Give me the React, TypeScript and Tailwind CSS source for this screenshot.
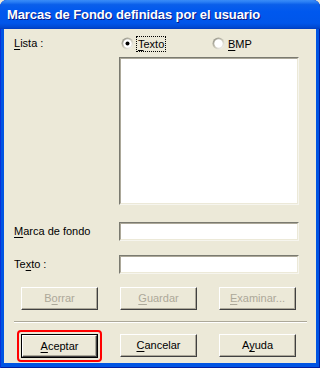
import React from 'react';

const font = { fontFamily: '"Liberation Sans", Arial, sans-serif' };

function U({ children }: { children: React.ReactNode }) {
  return <span className="underline underline-offset-[2px] decoration-1">{children}</span>;
}

function Radio({ checked }: { checked?: boolean }) {
  return (
    <svg width="13" height="13" viewBox="0 0 13 13" className="shrink-0">
      <defs>
        <linearGradient id={checked ? 'rg1' : 'rg2'} x1="0" y1="0" x2="1" y2="1">
          <stop offset="0" stopColor="#8a8a80" />
          <stop offset="0.5" stopColor="#c8c5b6" />
          <stop offset="1" stopColor="#ffffff" />
        </linearGradient>
      </defs>
      <circle cx="6.5" cy="6.5" r="6" fill={`url(#${checked ? 'rg1' : 'rg2'})`} />
      <circle cx="6.5" cy="6.5" r="4.2" fill="#ffffff" />
      {checked && <circle cx="6.5" cy="6.5" r="2" fill="#000000" />}
    </svg>
  );
}

function Btn({ children, disabled, isDefault }: { children: React.ReactNode; disabled?: boolean; isDefault?: boolean }) {
  const inner = (
    <div
      className={`flex h-full w-full items-center justify-center border border-t-white border-l-white border-r-[#404040] border-b-[#404040] bg-[#ECE9D8] text-[11px] shadow-[inset_-1px_-1px_0_#ACA899] ${
        disabled ? 'text-[#ACA899]' : 'text-black'
      }`}
    >
      {children}
    </div>
  );
  if (isDefault) {
    return <div className="h-[24px] w-[77px] border border-black">{inner}</div>;
  }
  return <div className="h-[23px] w-[77px]">{inner}</div>;
}

function Field({ className }: { className: string }) {
  return (
    <div
      className={`border border-t-[#7A7A70] border-l-[#7A7A70] border-r-[#F6F5EE] border-b-[#F6F5EE] ${className}`}
    >
      <div className="h-full w-full border border-t-[#ACA899] border-l-[#ACA899] border-r-[#ECE9D8] border-b-[#ECE9D8] bg-white" />
    </div>
  );
}

export default function App() {
  return (
    <div className="h-[368px] w-[320px] overflow-hidden bg-[#ECE9D8]" style={font}>
      <div className="flex h-[368px] w-[320px] flex-col rounded-t-[7px] bg-[#0054E3] shadow-[inset_1px_0_0_#0831D9,inset_-1px_0_0_#001EA0,inset_0_-1px_0_#001EA0]">
        <div className="flex h-[29px] items-center rounded-t-[7px] bg-[linear-gradient(to_bottom,#3A8CF7_0%,#2B80F5_6%,#0A5FEA_16%,#0058EE_40%,#0056EA_80%,#0049D2_94%,#003CBE_100%)] pl-[7px] pt-[1px]">
          <span className="text-[13px] font-bold tracking-[-0.1px] text-white [text-shadow:1px_1px_0_#0A1883]">
            Marcas de Fondo definidas por el usuario
          </span>
        </div>
        <div className="mx-[4px] mb-[5px] flex-1 bg-[#ECE9D8] text-[11px] text-black">
          <div className="relative pl-[10px] pt-[6px]">
            <div className="flex h-[17px] items-center">
              <div className="w-[107px]">
                <U>L</U>ista :
              </div>
              <div className="flex w-[91px] items-center">
                <Radio checked />
                <span className="ml-[2px] border border-dotted border-black px-[1px] leading-[14px]">
                  <U>T</U>exto
                </span>
              </div>
              <div className="flex items-center">
                <Radio />
                <span className="ml-[3px] leading-[14px]">
                  <U>B</U>MP
                </span>
              </div>
            </div>
            <div className="ml-[105px] mt-[5px]">
              <Field className="h-[148px] w-[180px]" />
            </div>
            <div className="mt-[17px] flex items-center">
              <div className="w-[105px]">
                <U>M</U>arca de fondo
              </div>
              <Field className="h-[19px] w-[180px]" />
            </div>
            <div className="mt-[14px] flex items-center">
              <div className="w-[105px]">
                Te<U>x</U>to :
              </div>
              <Field className="h-[19px] w-[180px]" />
            </div>
            <div className="ml-[7px] mt-[13px] flex gap-[22px]">
              <Btn disabled>
                B<U>o</U>rrar
              </Btn>
              <Btn disabled>
                <U>G</U>uardar
              </Btn>
              <Btn disabled>
                <U>E</U>xaminar...
              </Btn>
            </div>
            <div className="mr-[9px] mt-[11px] h-[2px] border-t border-b border-t-[#ACA899] border-b-white" />
            <div className="ml-[7px] mt-[11px] flex items-start gap-[22px]">
              <div className="relative">
                <div className="absolute left-[-4px] top-[-4px] h-[32px] w-[85px] rounded-[4px] border-2 border-[#FF0000]" />
                <Btn isDefault>
                  <U>A</U>ceptar
                </Btn>
              </div>
              <div className="mt-[0px]">
                <Btn>
                  <U>C</U>ancelar
                </Btn>
              </div>
              <Btn>
                A<U>y</U>uda
              </Btn>
            </div>
          </div>
        </div>
      </div>
    </div>
  );
}
